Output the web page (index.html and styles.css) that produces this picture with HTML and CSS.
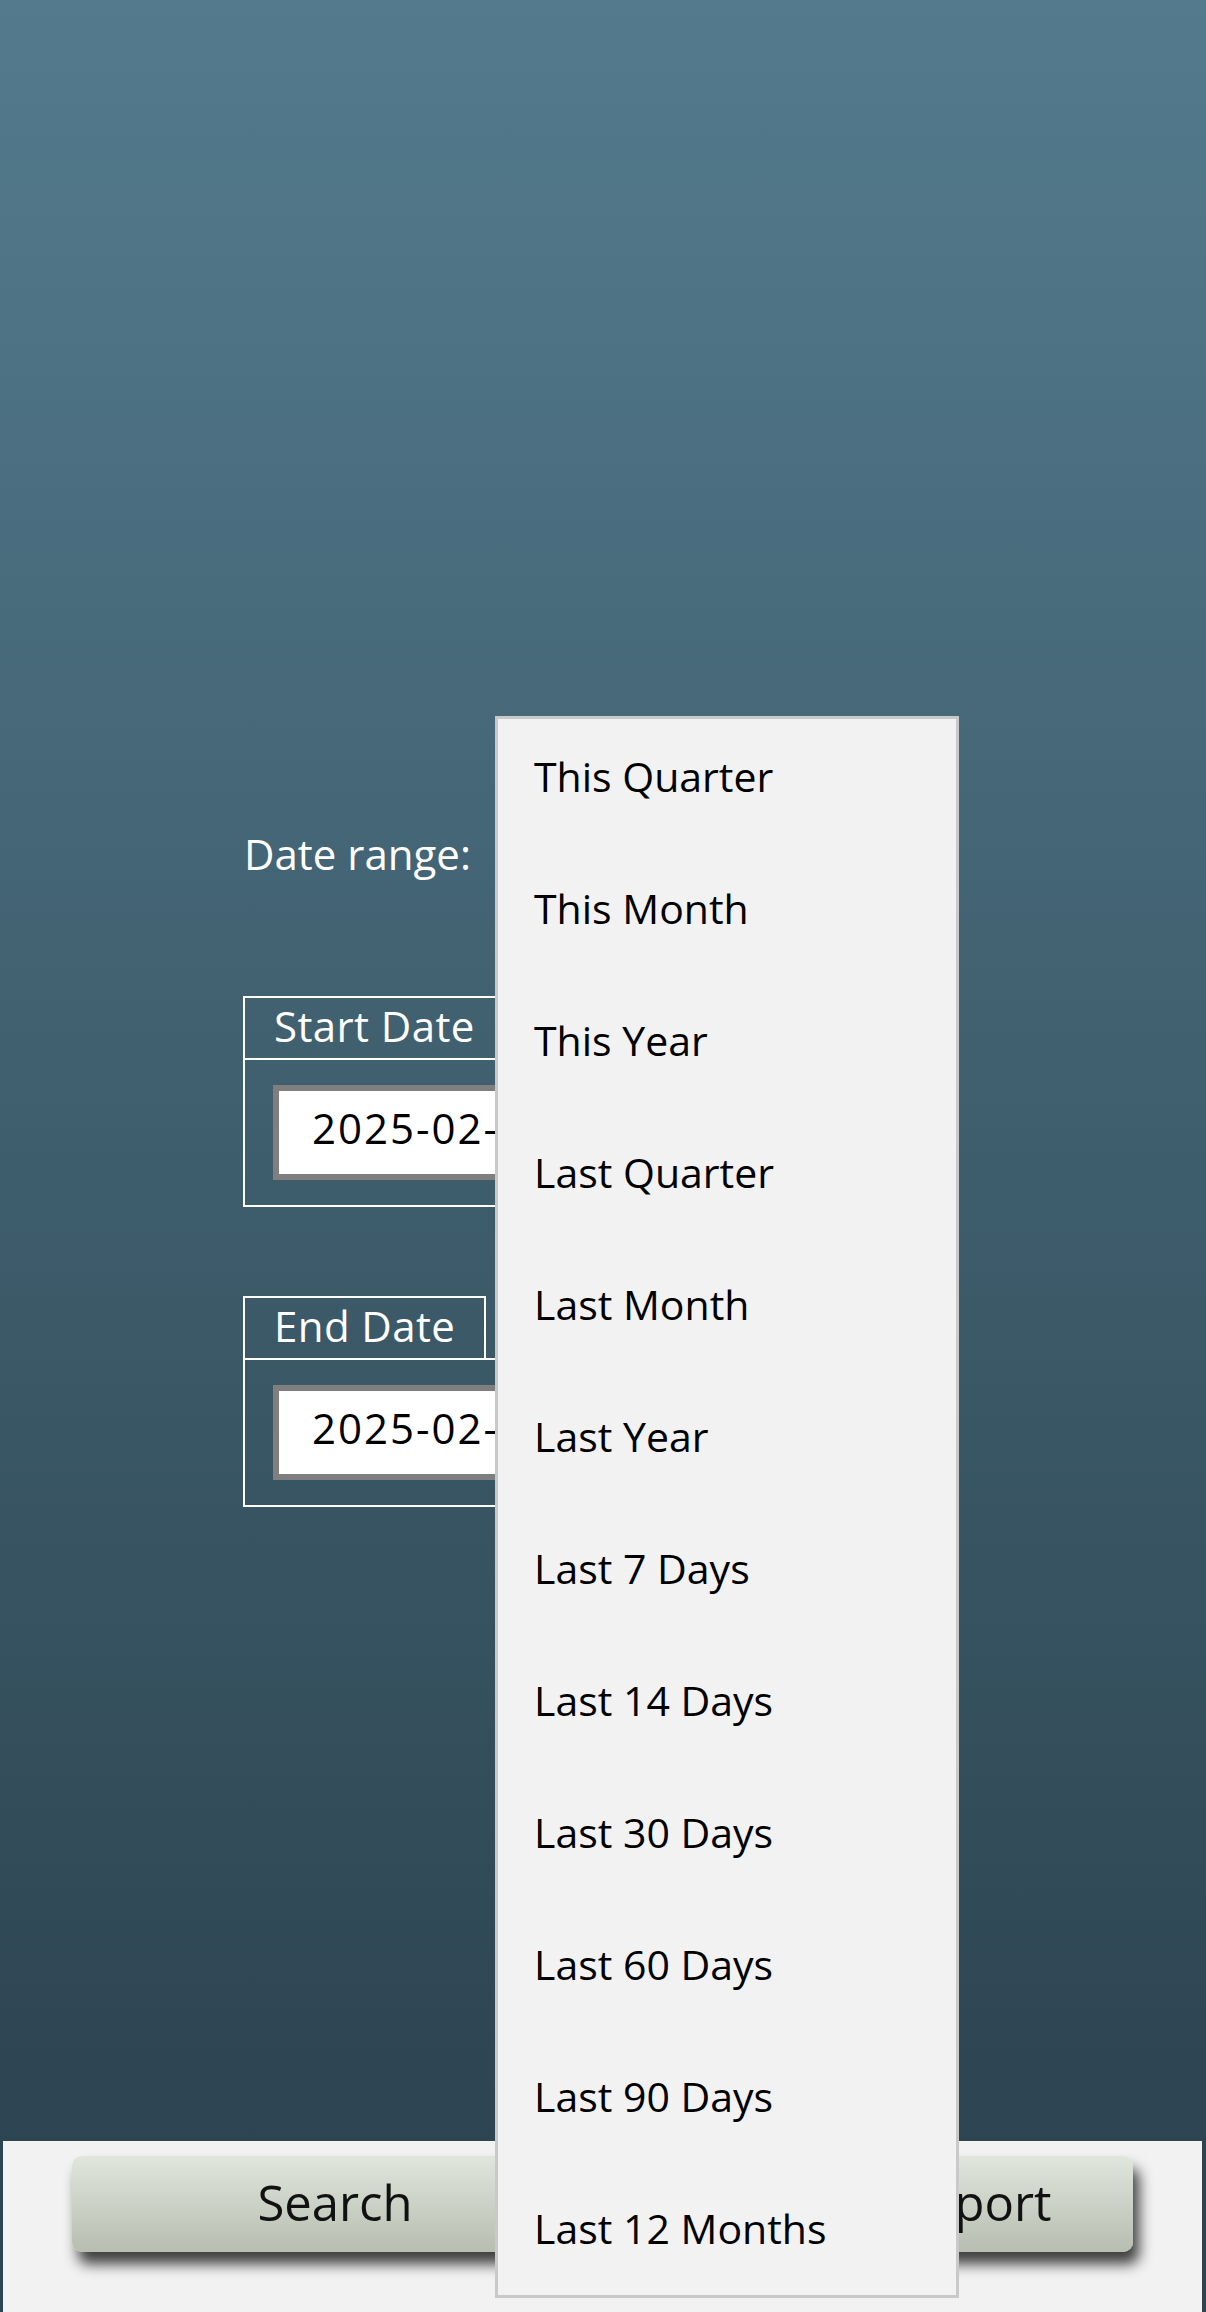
FILE: index.html
```html
<!DOCTYPE html>
<html>
<head>
    <meta charset="UTF-8">
    <title>Report Filters</title>
    <link rel="stylesheet" href="styles.css">
</head>
<body>
    <div class="page">
        <main class="filters">
            <div class="range-row">
                <label class="range-label">Date range:</label>
                <div class="range-select">
                    <ul class="range-options">
                        <li>This Quarter</li>
                        <li>This Month</li>
                        <li>This Year</li>
                        <li>Last Quarter</li>
                        <li>Last Month</li>
                        <li>Last Year</li>
                        <li>Last 7 Days</li>
                        <li>Last 14 Days</li>
                        <li>Last 30 Days</li>
                        <li>Last 60 Days</li>
                        <li>Last 90 Days</li>
                        <li>Last 12 Months</li>
                    </ul>
                </div>
            </div>

            <div class="date-group">
                <div class="date-tab">Start Date</div>
                <div class="date-panel">
                    <input class="date-input" type="text" value="2025-02-01">
                </div>
            </div>

            <div class="date-group date-group-end">
                <div class="date-tab">End Date</div>
                <div class="date-panel">
                    <input class="date-input" type="text" value="2025-02-28">
                </div>
            </div>
        </main>

        <footer class="actions">
            <button class="btn btn-search" type="button">Search</button>
            <button class="btn btn-export" type="button">Export</button>
        </footer>
    </div>
</body>
</html>
```

FILE: styles.css
```css
html, body {
    margin: 0;
    padding: 0;
}
body {
    font-family: "Open Sans", "Noto Sans", sans-serif;
    background: linear-gradient(to bottom, #537b8d 0, #2d4451 2141px);
    background-color: #2d4451;
    color: #fff;
}
.page {
    display: flex;
    flex-direction: column;
    height: 2312px;
}

/* filtros */
.filters {
    flex: 1;
    padding: 824px 0 0 243px;
}
.range-row {
    display: flex;
    align-items: center;
    height: 60px;
    gap: 20px;
}
.range-label {
    width: 231px;
    margin-left: 1px;
    font-size: 42px;
    line-height: 50px;
    white-space: nowrap;
}
.range-select {
    position: relative;
    width: 464px;
    height: 60px;
}
.range-options {
    position: absolute; /* lista aberta por cima da página */
    z-index: 10;
    top: -108px;
    left: 0;
    width: 464px;
    height: 1582px;
    overflow: hidden;
    box-sizing: border-box;
    margin: 0;
    padding: 0;
    list-style: none;
    background-color: #f2f2f2;
    border: 3px solid #c9c9c9;
    color: #000;
}
.range-options li {
    box-sizing: border-box;
    height: 132px;
    padding: 29px 36px 0;
    font-size: 41px;
    line-height: 56px;
}

.date-group {
    margin-top: 112px;
    width: 480px;
}
.date-group-end {
    margin-top: 89px;
}
.date-tab {
    display: inline-block;
    vertical-align: top;
    height: 60px;
    padding: 0 29px;
    border: 2px solid #fff;
    border-bottom: none;
    font-size: 42px;
    line-height: 56px;
    letter-spacing: 0.4px;
}
.date-panel {
    border: 2px solid #fff;
    padding: 25px 28px;
}
.date-input {
    display: block;
    box-sizing: border-box;
    width: 100%;
    height: 95px;
    margin: 0;
    padding: 0 0 10px 33px;
    border: 6px solid #7f7f7f;
    background-color: #fff;
    color: #000;
    font-family: "Open Sans", "Noto Sans", sans-serif;
    font-size: 42px;
    letter-spacing: 2px;
    outline: none;
}

/* barra de botões */
.actions {
    display: grid;
    grid-template-columns: 526px 313px;
    justify-content: space-between;
    height: 171px;
    box-sizing: border-box;
    margin: 0 4px 0 3px;
    padding: 15px 69px 0;
    background-color: #f2f2f2;
    align-items: start;
}
.btn {
    height: 96px;
    border: none;
    border-radius: 10px;
    background: linear-gradient(to bottom, #e0e6dc, #b8bdb1);
    box-shadow: 6px 12px 14px rgba(0, 0, 0, 0.75);
    color: #111;
    font-family: "Open Sans", "Noto Sans", sans-serif;
    font-size: 49px;
    line-height: 60px;
    padding: 0 0 4px;
    cursor: pointer;
}
```
